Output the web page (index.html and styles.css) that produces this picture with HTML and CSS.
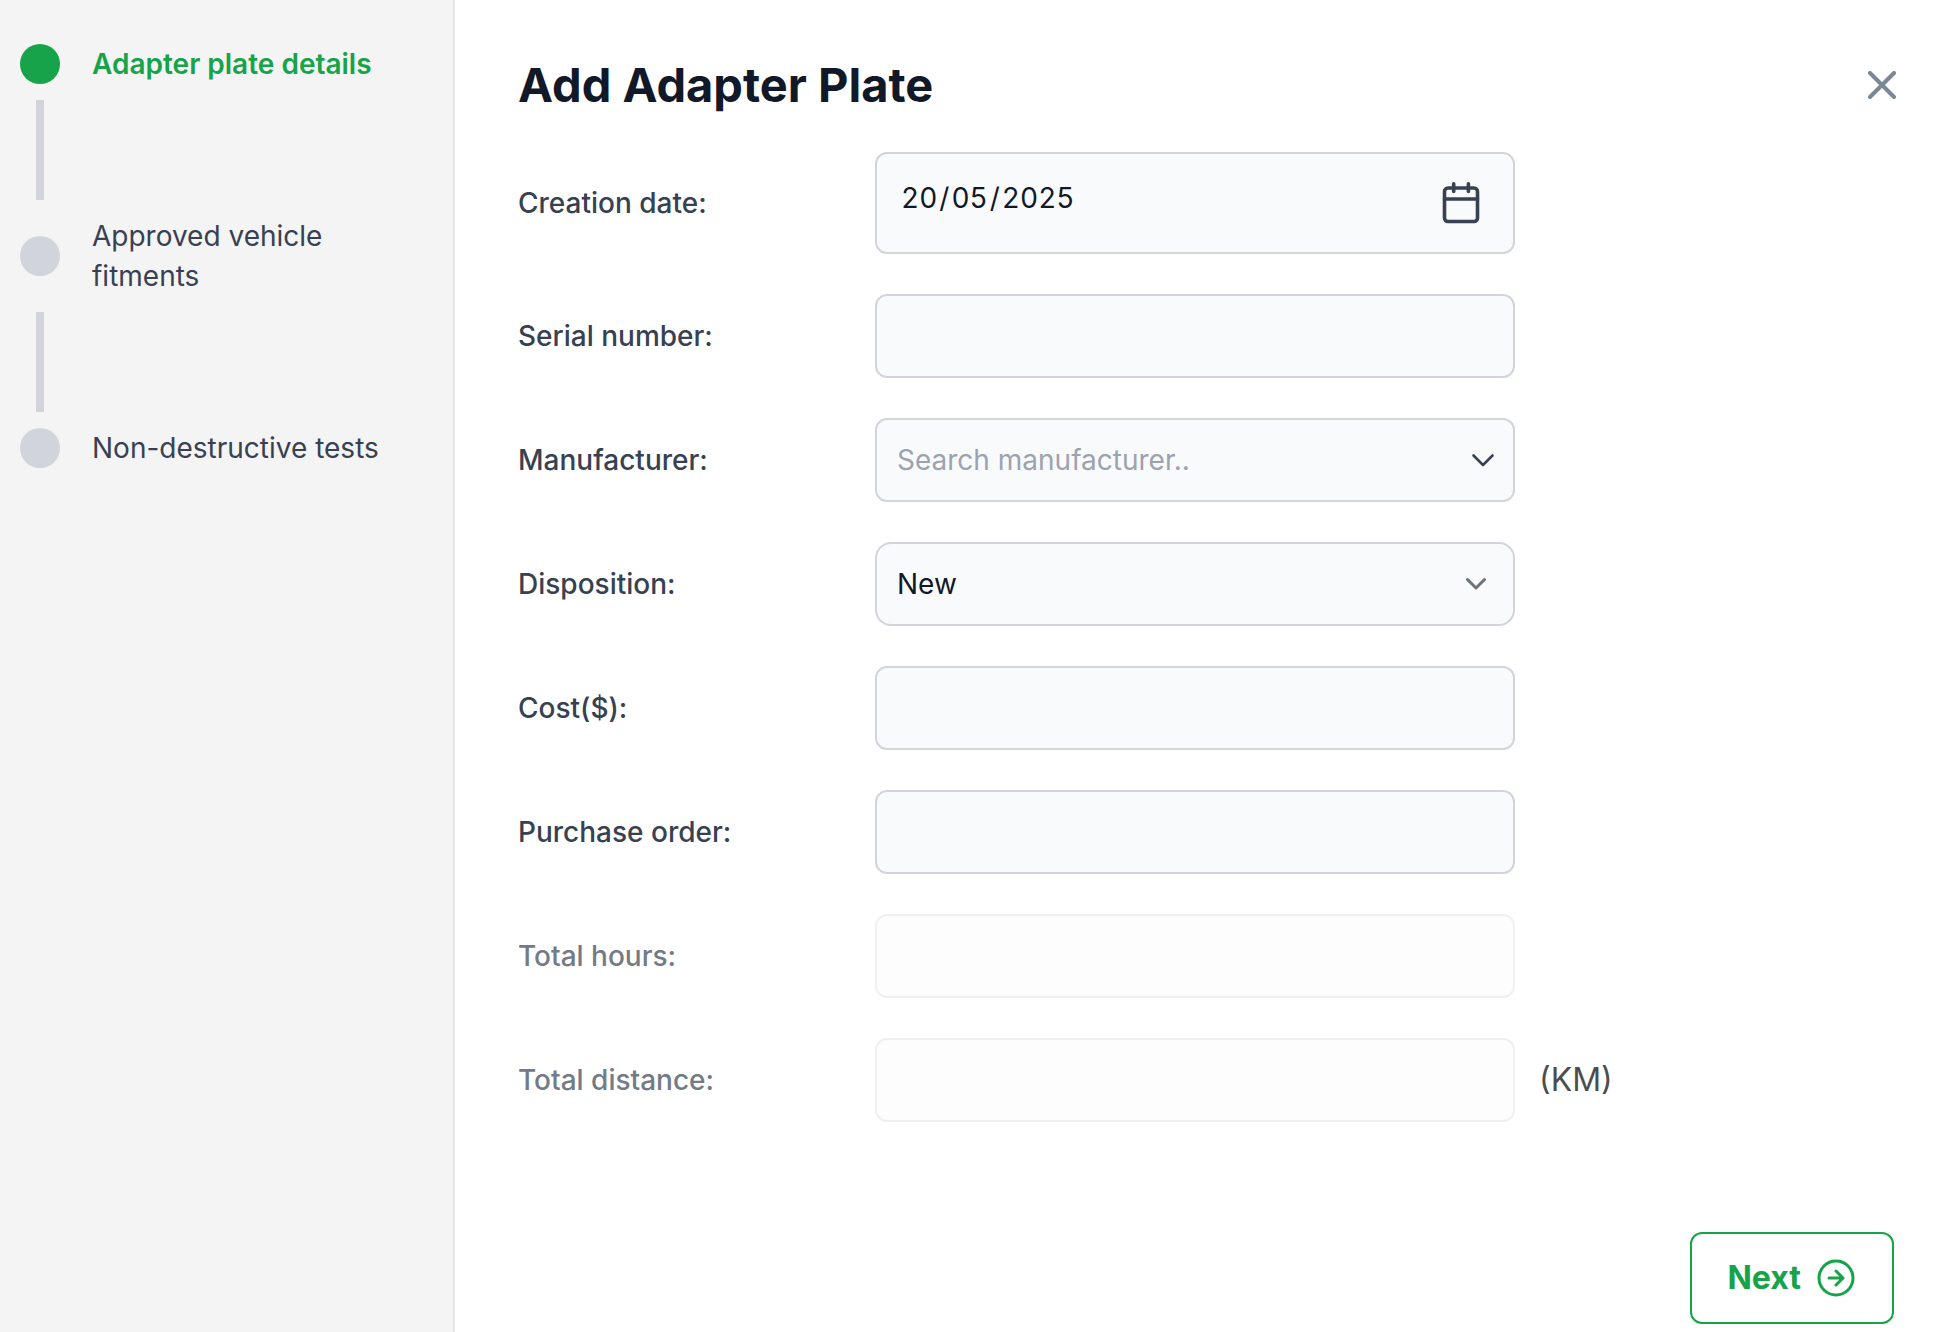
FILE: index.html
```html
<!DOCTYPE html>
<html lang="en-GB">

<head>
    <meta charset="UTF-8" />
    <meta name="viewport" content="width=device-width, initial-scale=1.0" />
    <title>Add Adapter Plate</title>
    <link rel="stylesheet" href="styles.css">
</head>

<body>
    <div class="dialog">
        <aside class="sidebar">
            <ol class="steps">
                <li class="step active" aria-current="step">
                    <span class="step-dot"></span>
                    <span class="step-label">Adapter plate details</span>
                </li>
                <li class="step-line" aria-hidden="true"></li>
                <li class="step">
                    <span class="step-dot"></span>
                    <span class="step-label">Approved vehicle fitments</span>
                </li>
                <li class="step-line" aria-hidden="true"></li>
                <li class="step">
                    <span class="step-dot"></span>
                    <span class="step-label">Non-destructive tests</span>
                </li>
            </ol>
        </aside>

        <main class="content">
            <header class="header">
                <h1>Add Adapter Plate</h1>
                <button type="button" class="close-btn" aria-label="Close">
                    <svg width="28" height="28" viewBox="0 0 28 28">
                        <path d="M2 2L26 26M26 2L2 26" />
                    </svg>
                </button>
            </header>

            <form id="plateForm" class="form">
                <div class="row">
                    <label for="creationDate">Creation date:</label>
                    <div class="field">
                        <input type="date" id="creationDate" class="date-input" value="2025-05-20">
                        <svg class="icon-calendar" width="40" height="44" viewBox="0 0 40 44">
                            <rect x="3.5" y="7" width="33" height="33.5" rx="3.5" />
                            <path d="M3.5 18H36.5M12.7 2.8V10.5M27.4 2.8V10.5" />
                        </svg>
                    </div>
                </div>

                <div class="row">
                    <label for="serialNumber">Serial number:</label>
                    <div class="field">
                        <input type="text" id="serialNumber">
                    </div>
                </div>

                <div class="row">
                    <label for="manufacturer">Manufacturer:</label>
                    <div class="field">
                        <input type="text" id="manufacturer" placeholder="Search manufacturer..">
                        <svg class="icon-search-arrow" width="24" height="16" viewBox="0 0 24 16">
                            <path d="M2.5 3.5L12 13L21.5 3.5" />
                        </svg>
                    </div>
                </div>

                <div class="row">
                    <label for="disposition">Disposition:</label>
                    <div class="field">
                        <select id="disposition">
                            <option selected>New</option>
                        </select>
                        <svg class="icon-select-arrow" width="24" height="16" viewBox="0 0 24 16">
                            <path d="M3.5 3.5L12 12L20.5 3.5" />
                        </svg>
                    </div>
                </div>

                <div class="row">
                    <label for="cost">Cost($):</label>
                    <div class="field">
                        <input type="text" id="cost">
                    </div>
                </div>

                <div class="row">
                    <label for="purchaseOrder">Purchase order:</label>
                    <div class="field">
                        <input type="text" id="purchaseOrder">
                    </div>
                </div>

                <div class="row disabled">
                    <label for="totalHours">Total hours:</label>
                    <div class="field">
                        <input type="text" id="totalHours" disabled>
                    </div>
                </div>

                <div class="row disabled">
                    <label for="totalDistance">Total distance:</label>
                    <div class="field">
                        <input type="text" id="totalDistance" disabled>
                    </div>
                    <span class="unit">(KM)</span>
                </div>
            </form>

            <footer class="footer">
                <button type="submit" form="plateForm" class="next-btn">
                    Next
                    <svg width="38" height="38" viewBox="0 0 38 38">
                        <circle cx="19" cy="19" r="17" />
                        <path d="M12 19H26M19 12L26 19L19 26" />
                    </svg>
                </button>
            </footer>
        </main>
    </div>
</body>

</html>
```

FILE: styles.css
```css
* {
    box-sizing: border-box;
}

body {
    margin: 0;
    font-family: Inter, "Liberation Sans", sans-serif;
    font-size: 28px;
    line-height: 40px;
    color: #374151;
    background-color: #fff;
}

svg {
    display: block;
    fill: none;
    stroke: currentColor;
    stroke-linecap: round;
    stroke-linejoin: round;
}

.dialog {
    display: flex;
    min-height: 100vh;
}

/* Step list */
.sidebar {
    flex: 0 0 455px;
    padding: 44px 52px 44px 20px;
    background-color: #f4f4f4;
    border-right: 2px solid #e5e7eb;
}

.steps {
    display: flex;
    flex-direction: column;
    gap: 16px;
    margin: 0;
    padding: 0;
    list-style: none;
}

.step {
    display: flex;
    align-items: center;
    gap: 32px;
}

.step-dot {
    flex: none;
    width: 40px;
    height: 40px;
    border-radius: 50%;
    background-color: #d1d5db;
}

.step-line {
    width: 8px;
    height: 100px;
    margin-left: 16px;
    background-color: #d1d5db;
}

.step.active {
    color: #16a34a;
    font-weight: 600;
}

.step.active .step-dot {
    background-color: #16a34a;
}

/* Main panel */
.content {
    flex: 1;
    display: flex;
    flex-direction: column;
    padding: 60px 48px 8px 63px;
}

.header {
    display: flex;
    align-items: center;
    justify-content: space-between;
    margin-bottom: 42px;
    padding-left: 0;
}

h1 {
    margin: 0;
    font-size: 47px;
    line-height: 50px;
    font-weight: 700;
    color: #111827;
}

button {
    font: inherit;
    background: none;
    cursor: pointer;
}

.close-btn {
    margin-right: -2px;
    padding: 0;
    border: none;
    color: #7b8794;
}

.close-btn svg {
    stroke-width: 4;
}

/* Form rows */
.form {
    display: flex;
    flex-direction: column;
    gap: 40px;
}

.row {
    display: flex;
    align-items: center;
}

.row label {
    flex: 0 0 357px;
    font-weight: 500;
}

.field {
    position: relative;
    flex: 0 1 640px;
}

.field input,
.field select {
    display: block;
    width: 100%;
    height: 84px;
    padding: 0 20px;
    font: inherit;
    color: #111827;
    background-color: #f9fafb;
    border: 2px solid #d1d5db;
    border-radius: 12px;
    appearance: none;
}

.field select {
    border-radius: 16px;
}

.field input::placeholder {
    color: #9ca3af;
    opacity: 1;
}

.field .date-input {
    height: 102px;
    padding: 0 20px 10px 22px;
    font-variant-numeric: tabular-nums;
}

/* Day first, whatever the browser locale */
.date-input::-webkit-datetime-edit-fields-wrapper {
    display: inline-grid;
    grid-auto-flow: row;
}

.date-input::-webkit-datetime-edit-text {
    grid-row: 1;
}

.date-input::-webkit-datetime-edit-day-field {
    grid-area: 1 / 1;
    padding: 0 2px;
}

.date-input::-webkit-datetime-edit-month-field {
    grid-area: 1 / 3;
    padding: 0 2px;
}

.date-input::-webkit-datetime-edit-year-field {
    grid-area: 1 / 5;
    padding: 0 2px;
}

.date-input::-webkit-calendar-picker-indicator {
    opacity: 0;
}

.field svg {
    position: absolute;
    top: 50%;
    transform: translateY(-50%);
    pointer-events: none;
}

.icon-calendar {
    right: 34px;
    stroke-width: 3.6;
}

.icon-search-arrow {
    right: 20px;
    stroke-width: 2.6;
}

.icon-select-arrow {
    right: 27px;
    stroke-width: 3;
    color: #6b7280;
}

.row.disabled label {
    color: #737b87;
}

.field input:disabled {
    background-color: #fdfdfd;
    border-color: #f0f0f0;
}

.unit {
    margin-left: 24px;
    font-size: 32px;
    color: #4d4d4d;
}

/* Footer */
.footer {
    display: flex;
    justify-content: flex-end;
    margin-top: auto;
    padding-top: 40px;
}

.next-btn {
    display: flex;
    align-items: center;
    gap: 16px;
    height: 92px;
    padding: 0 37px 0 35px;
    font-size: 32px;
    font-weight: 700;
    color: #16a34a;
    border: 2px solid #16a34a;
    border-radius: 12px;
}

.next-btn svg {
    stroke-width: 3;
}
```
